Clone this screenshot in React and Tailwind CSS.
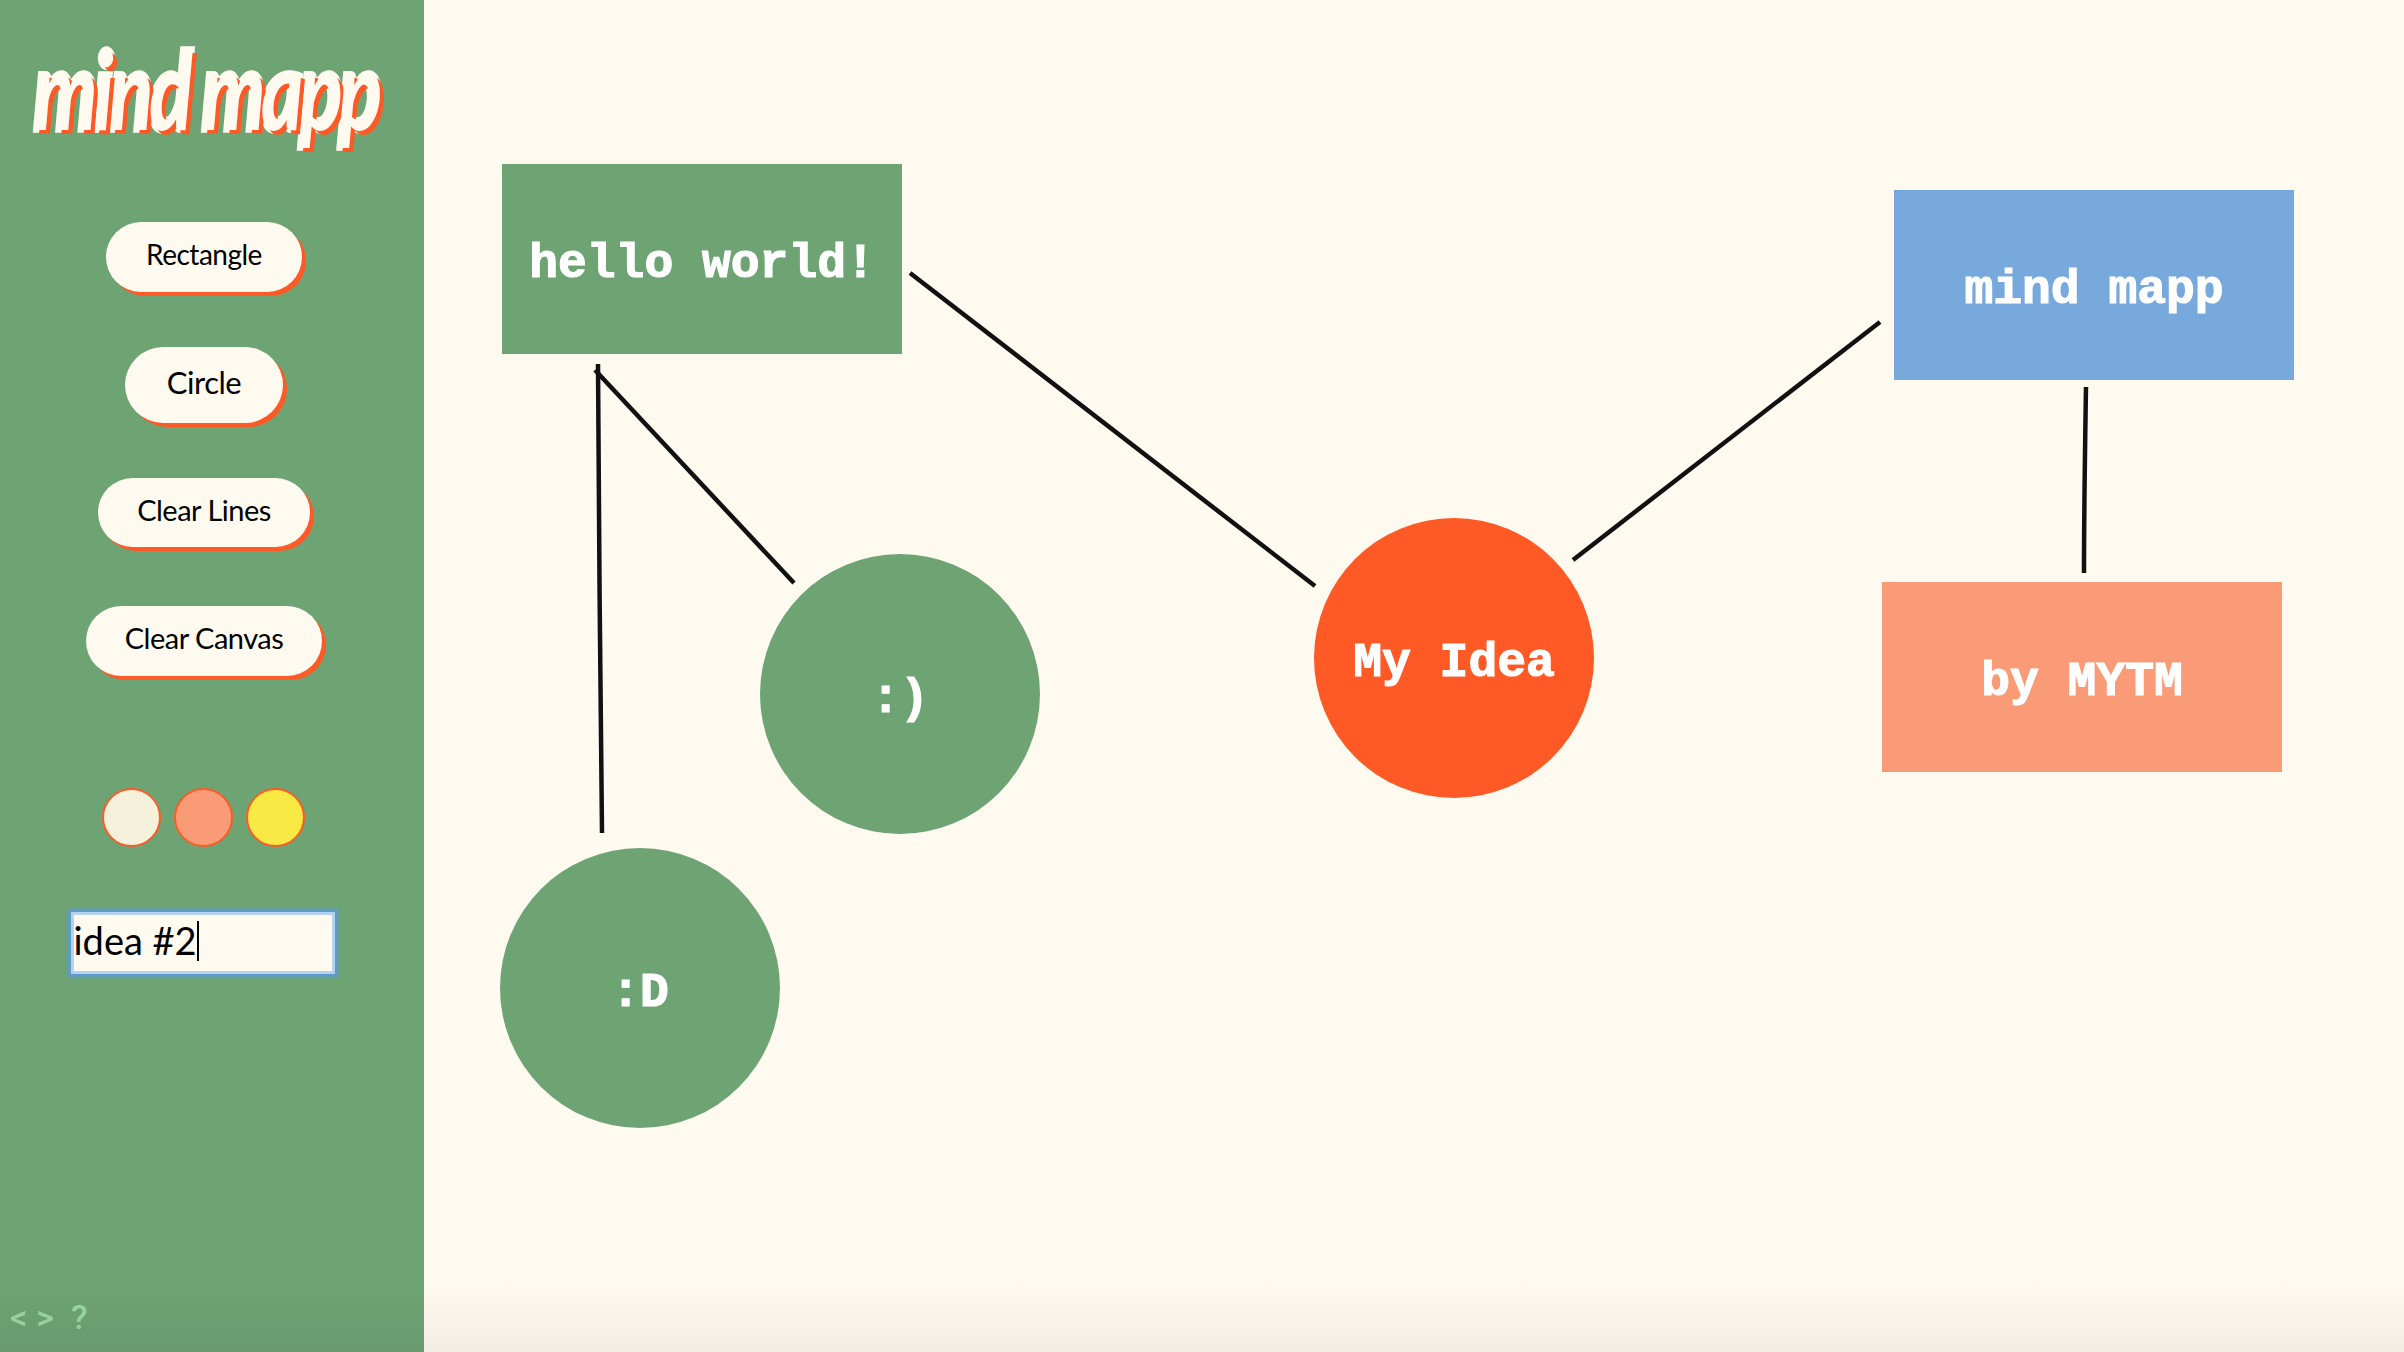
const buttonClass =
  "flex items-center justify-center rounded-full bg-[#fffaf0] pb-[6px] text-black shadow-[4px_4px_0_#ff5a26] font-['Lato',sans-serif] tracking-[-0.5px]";
const nodeText =
  "font-['Liberation_Mono',monospace] font-bold text-[48px] text-white blur-[0.5px] [-webkit-text-stroke:1.2px_white]";
const rectNode = "absolute flex h-[190px] w-[400px] items-center justify-center pt-[9px]";
const circleNode = "absolute flex h-[280px] w-[280px] items-center justify-center rounded-full pt-[9px]";

const lines = [
  "M486 273L891 586",
  "M174 364C175 500 176 700 178 833",
  "M171 370L370 583",
  "M1149 560L1456 322",
  "M1662 387C1661 450 1660 510 1660 573",
];

export default function App() {
  return (
    <div className="relative flex h-screen w-full overflow-hidden bg-[#fffaf0]">
      <aside className="flex h-full w-[424px] shrink-0 flex-col items-center bg-[#6ea373] pr-4">
        <div className="flex h-[222px] items-start justify-center pl-1 pt-[55px]">
          <h1 className="origin-[50%_78px] scale-y-[1.35] whitespace-nowrap font-['Lato',sans-serif] text-[80px] font-black italic leading-[90px] tracking-[-4px] text-[#fffaf0] [-webkit-text-stroke:4px_#fffaf0] [paint-order:stroke_fill] [text-shadow:4px_3px_0_#ff5a26]">
            mind mapp
          </h1>
        </div>
        <button className={`${buttonClass} h-[70px] w-[196px] text-[28px]`}>Rectangle</button>
        <button className={`${buttonClass} mt-[55px] h-[76px] w-[158px] text-[31px]`}>Circle</button>
        <button className={`${buttonClass} mt-[55px] h-[69px] w-[212px] text-[29px]`}>Clear Lines</button>
        <button className={`${buttonClass} mt-[59px] h-[70px] w-[236px] text-[29px]`}>Clear Canvas</button>
        <div className="-ml-[2px] mt-[112px] flex gap-[13px]">
          <div className="h-[59px] w-[59px] rounded-full border-2 border-[#ff5a26] bg-[#f6f1da]" />
          <div className="h-[59px] w-[59px] rounded-full border-2 border-[#ff5a26] bg-[#fa9b78]" />
          <div className="h-[59px] w-[59px] rounded-full border-2 border-[#ff5a26] bg-[#f9e945]" />
        </div>
        <div className="-ml-[3px] mt-[65px] flex h-[62px] w-[264px] items-center border-[3px] border-[#b5d2ef] bg-[#fffaf0] pb-[5px] font-['Lato',sans-serif] text-[38px] text-black shadow-[0_0_3px_3px_#5b9bd5]">
          <span>idea #2</span>
          <span className="h-[40px] w-[2px] bg-black" />
        </div>
        <div className="mt-auto flex w-full items-end gap-[9px] pb-[18px] pl-[10px] font-['Roboto',sans-serif] text-[34px] font-medium leading-[34px] text-[#9ad6a3]">
          <span>&lt;</span>
          <span>&gt;</span>
          <span className="ml-[8px]">?</span>
        </div>
      </aside>

      <main className="relative flex-1">
        <svg className="absolute inset-0 h-full w-full" fill="none" stroke="#111" strokeWidth="4.5">
          {lines.map((d) => (
            <path key={d} d={d} />
          ))}
        </svg>

        <div className={`${rectNode} left-[78px] top-[164px] bg-[#6ea373]`}>
          <span className={nodeText}>hello world!</span>
        </div>
        <div className={`${rectNode} left-[1470px] top-[190px] bg-[#77a9dc]`}>
          <span className={nodeText}>mind mapp</span>
        </div>
        <div className={`${rectNode} left-[1458px] top-[582px] bg-[#fa9b78]`}>
          <span className={nodeText}>by MYTM</span>
        </div>
        <div className={`${circleNode} left-[890px] top-[518px] bg-[#ff5a26]`}>
          <span className={nodeText}>My Idea</span>
        </div>
        <div className={`${circleNode} left-[336px] top-[554px] bg-[#6ea373]`}>
          <span className={nodeText}>:)</span>
        </div>
        <div className={`${circleNode} left-[76px] top-[848px] bg-[#6ea373]`}>
          <span className={nodeText}>:D</span>
        </div>
      </main>

      <div className="pointer-events-none absolute inset-x-0 bottom-0 h-[70px] bg-gradient-to-b from-transparent to-black/5" />
    </div>
  );
}
